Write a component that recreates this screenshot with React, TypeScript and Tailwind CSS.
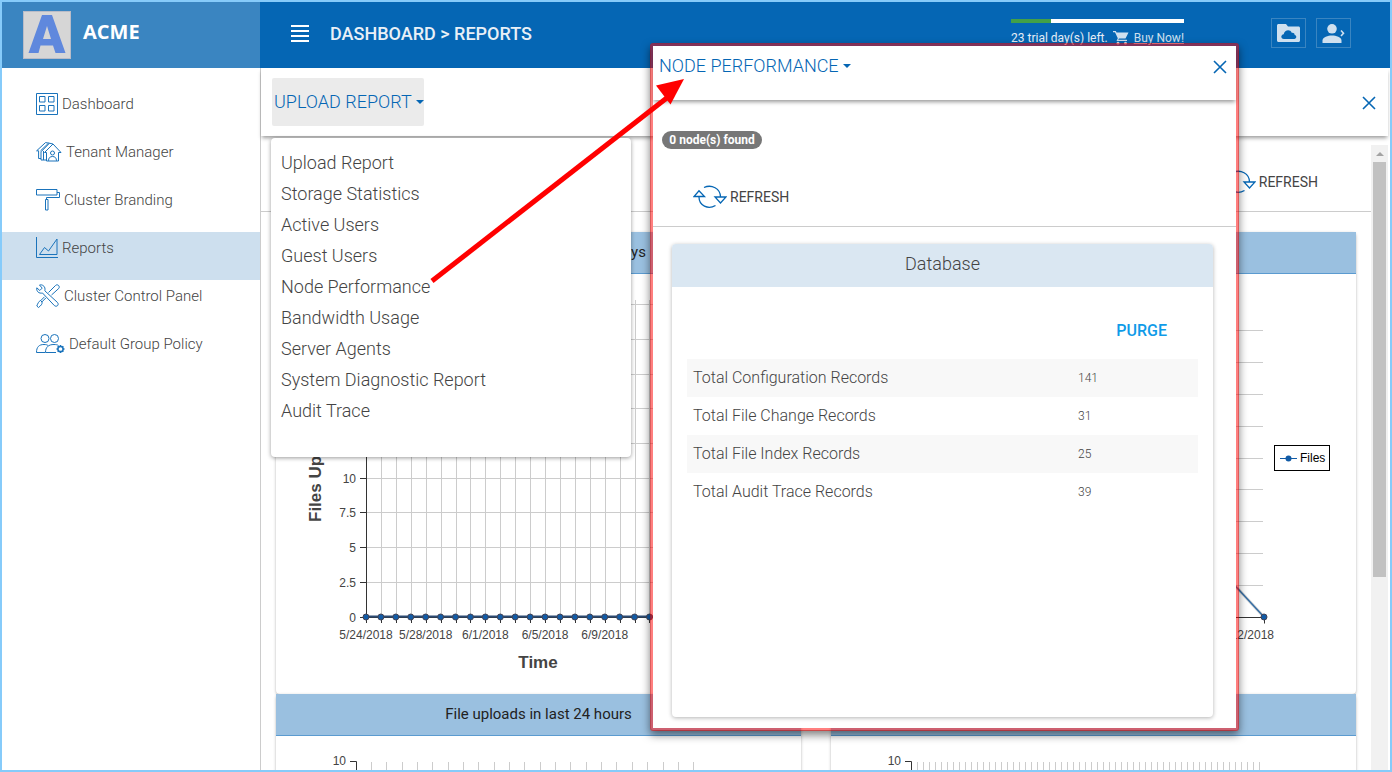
import { useState } from 'react';
import type { ReactNode } from 'react';

interface NavItem {
  label: string;
  icon: ReactNode;
}

const navItems: NavItem[] = [
  { label: 'Dashboard', icon: <DashboardIcon /> },
  { label: 'Tenant Manager', icon: <TenantIcon /> },
  { label: 'Cluster Branding', icon: <RollerIcon /> },
  { label: 'Reports', icon: <ReportsIcon /> },
  { label: 'Cluster Control Panel', icon: <ToolsIcon /> },
  { label: 'Default Group Policy', icon: <GroupIcon /> },
];

const reportMenu = [
  'Upload Report',
  'Storage Statistics',
  'Active Users',
  'Guest Users',
  'Node Performance',
  'Bandwidth Usage',
  'Server Agents',
  'System Diagnostic Report',
  'Audit Trace',
];

const dbRecords = [
  { label: 'Total Configuration Records', value: 141 },
  { label: 'Total File Change Records', value: 31 },
  { label: 'Total File Index Records', value: 25 },
  { label: 'Total Audit Trace Records', value: 39 },
];

function DashboardIcon() {
  return (
    <svg width="22" height="22" viewBox="0 0 22 22" fill="none" stroke="#1a73bb">
      <path d="M.5 .5h21v21h-21z" />
      <path d="M3.500 3.500h5.500v5.500h-5.500zM12.500 3.500h5.500v5.500h-5.500zM3.500 12.500h5.500v5.500h-5.500zM12.500 12.500h5.500v5.500h-5.500z" />
    </svg>
  );
}

function TenantIcon() {
  return (
    <svg width="26" height="20" viewBox="0 0 26 20" fill="none" stroke="#1a73bb">
      <path d="M8.500 10.500 17 2l8 8.500h-2.500v8.500h-12v-8.500z" />
      <path d="M17 2l-3.500-.800L5 9.800v8.200h5.500M13.500 1.200 9.500.6.600 8.800h2v7.700H5M4.500 8.800l8-7.600M7.500 9v9" />
      <circle cx="16.500" cy="11" r="2" />
      <path d="M12.500 18.800c0-3 1.600-4.300 4-4.300s4 1.300 4 4.300" />
    </svg>
  );
}

function RollerIcon() {
  return (
    <svg width="24" height="22" viewBox="0 0 24 22" fill="none" stroke="#1a73bb">
      <path d="M.5 .5h20.500v5.500H.5zM21 3.500h2.500v5H10.500v2M9.500 10.500h2.500v10.500H9.500z" />
    </svg>
  );
}

function ReportsIcon() {
  return (
    <svg width="22" height="22" viewBox="0 0 22 22" fill="none" stroke="#1a73bb">
      <path d="M.5 0v20.500H22M3.500 17.500 8.500 10.500l4 3.500L21 2v15.500z" />
    </svg>
  );
}

function ToolsIcon() {
  return (
    <svg width="24" height="24" viewBox="0 0 24 24" fill="none" stroke="#1a73bb">
      <path d="M3.500 1C6 .2 9 2 9 5.200c0 .8-.1 1.200-.2 1.600L21.500 18.500c2 2.500-1 5-3.200 3L6.500 9C3 9.800.2 7.500.8 3.800l3 2.700 2.400-2.400z" />
      <path d="M12.500 8.500 19.500 1.500c2-2 5 .8 3.200 3L15.500 11M9.800 14l-4 4M8.500 12.800l-4 4M4.500 16.500l1.500 1.500c.5 2-1 3.500-3.500 5.500L.8 22c1-2.500 1.800-4.500 3.700-5.500z" />
    </svg>
  );
}

function GroupIcon() {
  return (
    <svg width="29" height="20" viewBox="0 0 29 20" fill="none" stroke="#1a73bb">
      <circle cx="9" cy="4.500" r="4" />
      <circle cx="18.500" cy="4.500" r="4" />
      <path d="M9 18.500H.5c0-5.500 2.500-8 7.500-8 2 0 3 .300 4 1M20 18.500H9.500c0-5.500 3-8 8.500-8 2 0 3.500.300 4.500 1" />
      <circle cx="24.500" cy="15" r="2.600" strokeWidth="1.500" />
      <path d="M24.500 11v1.500M24.500 17.500v1.500M20.500 15h1.500M27 15h1.500M21.700 12.200l1 1M26.300 16.800l1 1M21.700 17.800l1-1M26.300 13.200l1-1" strokeWidth="1.500" />
    </svg>
  );
}

function RefreshIcon() {
  return (
    <svg width="34" height="24" viewBox="0 0 34 24" fill="none" stroke="#0566b4" strokeWidth="1.300">
      <path d="M11 2.500C18.500-1 27.500 3.500 27.500 12M22.500 20.500C15 25 6 20.500 6 12" />
      <path d="M22 12h11l-5.500 6zM1 11.500h10.500L6 5.800z" />
    </svg>
  );
}

function CloseButton() {
  return (
    <button aria-label="Close" className="p-1">
      <svg width="14" height="14" viewBox="0 0 14 14" stroke="#0566b4" strokeWidth="1.600">
        <path d="M1 1l12 12M13 1L1 13" />
      </svg>
    </button>
  );
}

function Caret() {
  return <span className="border-x-4 border-t-4 border-x-transparent border-t-[#0566b4]" />;
}

function RefreshButton() {
  return (
    <button className="flex items-center gap-[3px] text-sm text-[#444]">
      <RefreshIcon />
      REFRESH
    </button>
  );
}

function Header() {
  return (
    <header className="flex h-[66px] shrink-0 items-start bg-[#0566b4] pr-[39px] pl-[31px]">
      <button aria-label="Toggle menu" className="mt-[23px] flex w-[18px] flex-col gap-[3px]">
        {[0, 1, 2, 3].map((n) => <span key={n} className="h-[2px] w-full bg-white" />)}
      </button>
      <h1 className="mt-5 ml-[21px] text-lg leading-6 font-medium text-[#e9f0f7]">DASHBOARD &gt; REPORTS</h1>
      <div className="mt-[17px] ml-auto w-[173px]">
        <div className="h-1 bg-white"><div className="h-1 w-10 bg-[#43a047]" /></div>
        <div className="mt-[7px] flex items-center justify-between text-xs text-[#e6eef7]">
          <span>23 trial day(s) left.</span>
          <svg width="16" height="14" viewBox="0 0 16 14" fill="#cfe0ef">
            <path d="M0 0h2.800l.7 1.500H15.500L12.500 7.500H6l-.8 1.300H14V10H3.500l1.300-2.700L2 1.200H0z" />
            <circle cx="5" cy="12.200" r="1.400" />
            <circle cx="12.500" cy="12.200" r="1.400" />
          </svg>
          <a href="#buy" className="text-[#cfe0ef] underline">Buy Now!</a>
        </div>
      </div>
      <div className="mt-4 ml-[87px] flex gap-[10px]">
        <button aria-label="Files" className="flex h-[30px] w-[35px] items-center justify-center border border-[#3a85c1]">
          <svg width="23" height="18" viewBox="0 0 23 18">
            <path d="M1.500 0H9l2 2.500h10.500c.8 0 1.500.7 1.500 1.500v12.500c0 .8-.7 1.500-1.500 1.500h-20C.7 18 0 17.300 0 16.500v-15C0 .7.700 0 1.500 0z" fill="#cfe0ef" />
            <path d="M7 15C3.500 15 3.500 10.800 6.700 10.300 7.500 6 13 4.800 14.700 8.800c2.300-.3 3.100 1.200 2.900 2.300 2.500.4 2.200 3.900-.3 3.900z" fill="#0566b4" />
          </svg>
        </button>
        <button aria-label="Account" className="flex h-[30px] w-[35px] items-center justify-center border border-[#3a85c1]">
          <svg width="23" height="19" viewBox="0 0 23 19" fill="#cfe0ef">
            <circle cx="10" cy="4.800" r="4.800" />
            <path d="M.5 19v-2.500C.5 13 6 11.500 10 11.500s9.500 1.500 9.500 5V19z" />
            <path d="M19 6.500l2.500 2.700L19 12" fill="none" stroke="#cfe0ef" strokeWidth="1.600" />
          </svg>
        </button>
      </div>
    </header>
  );
}

function Sidebar() {
  return (
    <aside className="w-[258px] shrink-0">
      <div className="flex h-[66px] items-start gap-3 bg-[#3a85c1] pt-[9px] pl-[21px]">
        <svg width="48" height="48" viewBox="0 0 48 48">
          <rect width="48" height="48" fill="#b9bcc8" />
          <rect x="1" y="1" width="46" height="46" fill="#d6d6d6" />
          <path d="M19 4h10l13.500 38H32.500l-2.500-7.500H17.500L15.500 42H5.500zM24 15l-4 13h8z" fill="#5f88dd" fillRule="evenodd" />
        </svg>
        <span className="pt-[7px] font-['Open_Sans',sans-serif] text-xl leading-7 font-bold text-white">ACME</span>
      </div>
      <nav className="pt-5">
        {navItems.map((item) => (
          <a
            key={item.label}
            href="#"
            className={`flex h-12 items-start pl-[34px] text-[15px] leading-8 font-light text-[#444] ${item.label === 'Reports' ? 'bg-[#cddfee]' : ''}`}
          >
            <span className="mr-1 flex h-8 items-center">{item.icon}</span>
            {item.label}
          </a>
        ))}
      </nav>
    </aside>
  );
}

function ChartCard({ title, children }: { title: string; children: ReactNode }) {
  return (
    <section className="rounded-sm bg-white shadow-[0_1px_3px_rgba(0,0,0,0.3)]">
      <h2 className="h-[42px] border-b border-[#5b9bd0] bg-[#9ac0e0] text-center text-[15px] leading-10 text-[#222]">{title}</h2>
      {children}
    </section>
  );
}

function UploadsChart() {
  const step = 14.92;
  const points = Array.from({ length: 24 }, (_, i) => 90 + i * step);
  const yLabels = ['0', '2.5', '5', '7.5', '10'];
  const dates = ['5/24/2018', '5/28/2018', '6/1/2018', '6/5/2018', '6/9/2018'];
  return (
    <svg viewBox="0 0 525 420" className="block w-full font-['Liberation_Sans',Arial,sans-serif]" fill="#444" fontSize="12">
      {Array.from({ length: 10 }, (_, i) => {
        const y = Math.floor(343 - i * 34.7) + 0.5;
        return (
          <g key={i}>
            <path d={`M90 ${y}H433`} stroke="#ccc" />
            <path d={`M84 ${y}h6`} stroke="#333" />
            {yLabels[i] && <text x="80" y={y + 4} textAnchor="end">{yLabels[i]}</text>}
          </g>
        );
      })}
      {points.map((x, i) => (
        <g key={i}>
          <path d={`M${Math.round(x) + 0.5} 26V343`} stroke="#ccc" />
          <path d={`M${Math.round(x) + 0.5} 343v6`} stroke="#333" />
        </g>
      ))}
      <path d="M90.500 26V343.500H433" fill="none" stroke="#333" />
      <path d="M90 342.500H433" stroke="#2d4b73" strokeWidth="2" />
      {points.map((x, i) => <circle key={i} cx={x} cy="343" r="3" fill="#115ba6" stroke="#445" />)}
      {dates.map((d, i) => <text key={d} x={90 + i * step * 4} y="365" textAnchor="middle">{d}</text>)}
      <text x="262" y="394" textAnchor="middle" fontSize="17" fontWeight="bold">Time</text>
      <text transform="translate(45 248) rotate(-90)" fontSize="17" fontWeight="bold">Files Uploaded</text>
    </svg>
  );
}

function FilesChart() {
  return (
    <svg viewBox="0 0 525 420" className="block w-full font-['Liberation_Sans',Arial,sans-serif]" fill="#444" fontSize="12">
      {[56, 88, 120, 152, 184, 215, 247, 279, 311].map((y) => <path key={y} d={`M90 ${y + 0.5}H432`} stroke="#ccc" />)}
      <path d="M90 343.500h343.500v6" fill="none" stroke="#333" />
      <path d="M396 303l37 40" stroke="#999" strokeWidth="3" opacity=".4" />
      <path d="M396 303l37 40" stroke="#346da4" strokeWidth="1.500" />
      <circle cx="433" cy="343" r="3" fill="#115ba6" stroke="#445" />
      <text x="443" y="365" textAnchor="end">6/12/2018</text>
      <rect x="443.500" y="171.500" width="55" height="25" fill="#fff" stroke="#000" />
      <path d="M449 184.500h17" stroke="#115ba6" />
      <circle cx="457.500" cy="184.500" r="3" fill="#115ba6" />
      <text x="469" y="188" fill="#000">Files</text>
    </svg>
  );
}

function HourlyChart({ axis, step, count }: { axis: number; step: number; count: number }) {
  return (
    <svg viewBox="0 0 525 420" className="block w-full font-['Liberation_Sans',Arial,sans-serif]" fill="#444" fontSize="12">
      {Array.from({ length: count }, (_, i) => (
        <path key={i} d={`M${Math.floor(axis + (i + 1) * step) + 0.5} 26V343`} stroke="#ccc" />
      ))}
      <path d={`M${axis - 6} 25.500h6.500V343`} fill="none" stroke="#333" />
      <text x={axis - 10} y="29" textAnchor="end">10</text>
    </svg>
  );
}

function ReportMenu() {
  return (
    <ul className="absolute top-[70px] left-[10px] z-10 w-[360px] rounded bg-white pt-[9px] pb-[31px] shadow-[0_1px_4px_rgba(0,0,0,0.4)]">
      {reportMenu.map((label) => (
        <li key={label}>
          <button className="block w-full px-[10px] text-left text-lg leading-[31px] font-light text-[#444]">{label}</button>
        </li>
      ))}
    </ul>
  );
}

function NodePerformanceDialog() {
  return (
    <div
      role="dialog"
      aria-label="Node performance"
      className="absolute top-[41px] left-[648px] z-20 w-[589px] rounded-[3px] border-[3px] border-[#ff0000]/50 bg-white bg-clip-padding pb-[11px] shadow-[0_4px_8px_rgba(0,0,0,0.5)]"
    >
      <div className="flex h-[54px] items-start justify-between pt-[5px] pr-[5px] pl-[6px] shadow-[0_3px_4px_-1px_rgba(0,0,0,0.4)]">
        <button className="flex items-center gap-1 text-lg leading-[30px] font-light text-[#0566b4]">
          NODE PERFORMANCE
          <Caret />
        </button>
        <span className="pt-[5px]"><CloseButton /></span>
      </div>
      <div className="border-b border-[#ccc] pt-[31px] pb-[17px]">
        <span className="ml-[9px] block w-[100px] rounded-full bg-[#777] text-center text-xs leading-[18px] font-bold text-white">0 node(s) found</span>
        <div className="mt-9 ml-10"><RefreshButton /></div>
      </div>
      <section className="mt-[17px] mr-[23px] ml-[19px] h-[473px] rounded shadow-[0_1px_4px_rgba(0,0,0,0.3)]">
        <h2 className="h-[43px] rounded-t bg-[#dae7f2] text-center text-lg leading-10 font-light text-[#444]">Database</h2>
        <div className="flex justify-end pt-8 pr-[46px] pb-4">
          <button className="text-base font-medium text-[#0f9be8]">PURGE</button>
        </div>
        <div className="px-[15px]">
          <table className="w-full text-left font-light text-[#444]">
            <tbody>
              {dbRecords.map((r) => (
                <tr key={r.label} className="h-[38px] odd:bg-[#f8f8f8]">
                  <th scope="row" className="pl-[6px] text-base font-light">{r.label}</th>
                  <td className="w-[120px] text-xs">{r.value}</td>
                </tr>
              ))}
            </tbody>
          </table>
        </div>
      </section>
    </div>
  );
}

export default function App() {
  const [menuOpen, setMenuOpen] = useState(true);

  return (
    <div className="relative flex h-screen overflow-hidden border-2 border-[#86cbfa] bg-white font-['Roboto',sans-serif]">
      <Sidebar />
      <div className="flex min-w-0 flex-1 flex-col">
        <Header />
        <main className="relative flex min-h-0 flex-1 flex-col border-l border-[#ccc] pr-[2px]">
          <div className="z-10 flex h-[68px] shrink-0 items-start justify-between pt-[10px] pr-2 pl-[11px] shadow-[0_3px_4px_-1px_rgba(0,0,0,0.4)]">
            <button
              onClick={() => setMenuOpen((o) => !o)}
              className="flex h-12 items-center gap-1 rounded-xs bg-[#ebebeb] pl-[2px] text-lg font-light text-[#0566b4]"
            >
              UPLOAD REPORT
              <Caret />
            </button>
            <span className="pt-[14px]"><CloseButton /></span>
          </div>
          {menuOpen && <ReportMenu />}
          <div className="mt-[9px] flex min-h-0 flex-1">
            <div className="min-w-0 flex-1 overflow-hidden">
              <div className="flex h-[67px] items-start justify-end border-b border-[#ccc] pt-[25px] pr-[53px]">
                <RefreshButton />
              </div>
              <div className="mt-5 grid grid-cols-2 gap-x-[30px] px-[15px]">
                <ChartCard title="Number of uploads, last 20 days"><UploadsChart /></ChartCard>
                <ChartCard title="Files"><FilesChart /></ChartCard>
                <ChartCard title="File uploads in last 24 hours"><HourlyChart axis={80} step={15.35} count={22} /></ChartCard>
                <ChartCard title="Uploads"><HourlyChart axis={80} step={6} count={58} /></ChartCard>
              </div>
            </div>
            <div className="flex w-[17px] flex-col items-center bg-[#f1f1f1]">
              <span className="mt-[7px] mb-[6px] border-x-4 border-b-4 border-x-transparent border-b-[#a3a3a3]" />
              <div className="h-[415px] w-[13px] bg-[#c1c1c1]" />
            </div>
          </div>
        </main>
      </div>
      <NodePerformanceDialog />
      {/* callout from the menu entry to the dialog it opens */}
      <svg className="pointer-events-none absolute top-[76px] left-[428px] z-30" width="256" height="206" viewBox="0 0 256 206">
        <path d="M2 203 238 19" stroke="#f00" strokeWidth="5" />
        <path d="M254 1 226 7.500l14.500 19z" fill="#f00" />
      </svg>
    </div>
  );
}
